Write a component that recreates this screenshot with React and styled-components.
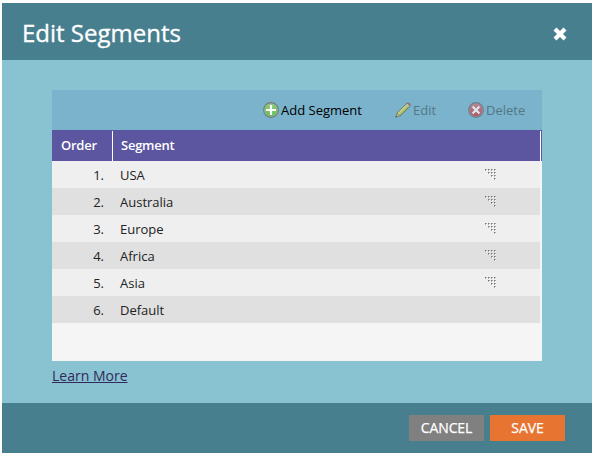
import React from "react";
import styled, { createGlobalStyle } from "styled-components";

const GlobalStyle = createGlobalStyle`
  * { box-sizing: border-box; }
  body {
    margin: 0;
    background: #fff;
    font-family: "Open Sans", "Noto Sans", sans-serif;
  }
  button { font-family: inherit; border: 0; padding: 0; margin: 0; background: none; }
  svg { flex-shrink: 0; }
`;

const Dialog = styled.section`
  display: flex;
  flex-direction: column;
  width: 590px;
  height: 450px;
  margin: 3px 0 0 2px;
  background: #89c2d0;
`;

const Header = styled.header`
  display: flex;
  align-items: center;
  justify-content: space-between;
  height: 57px;
  padding: 0 25px 0 20px;
  background: #477f8f;
`;

const Title = styled.h1`
  margin: 0;
  padding-top: 3px;
  font-size: 24px;
  font-weight: 400;
  line-height: 32px;
  color: #fff;
  -webkit-text-stroke: 0.3px #fff;
`;

const CloseButton = styled.button`
  display: flex;
  width: 14px;
  height: 14px;
  margin-top: 5px;
`;

const Body = styled.div`
  flex: 1;
  padding: 30px 50px 0;
`;

const Panel = styled.div`
  height: 271px;
  background: #f5f5f5;
`;

const Toolbar = styled.div`
  display: flex;
  justify-content: flex-end;
  align-items: center;
  height: 40px;
  padding-right: 17px;
  background: #7ab3cb;
`;

const ToolButton = styled.button`
  display: flex;
  align-items: center;
  gap: 2px;
  margin-left: ${(p) => p.$before || 0}px;
  font-size: 13px;
  line-height: 20px;
  color: ${(p) => (p.disabled ? "#557785" : "#000")};
`;

const ToolLabel = styled.span`
  width: ${(p) => p.$width}px;
  white-space: nowrap;
  text-align: left;
`;

const TableHead = styled.div`
  display: flex;
  height: 31px;
  padding: 1px 1px 0 0;
  background: #5c559f;
`;

const HeadCell = styled.div`
  flex: ${(p) => (p.$width ? `0 0 ${p.$width}px` : 1)};
  padding-left: ${(p) => p.$inset}px;
  border-right: 1px solid #fff;
  font-size: 13px;
  font-weight: 600;
  line-height: 29px;
  letter-spacing: -0.25px;
  color: #fff;
`;

const Row = styled.div`
  display: grid;
  grid-template-columns: 52px 1fr 12px;
  column-gap: 16px;
  align-items: center;
  width: 488px;
  height: 27px;
  padding-right: 43px;
  background: ${(p) => (p.$shaded ? "#e0e0e0" : "#efefef")};
  font-size: 13px;
  line-height: 25px;
  color: #222;
`;

const Cell = styled.span`
  padding-top: 2px;
  text-align: ${(p) => (p.$numeric ? "right" : "left")};
`;

const LearnMore = styled.a`
  display: inline-block;
  margin-top: 5px;
  font-size: 14px;
  line-height: 20px;
  color: #30295c;
  text-decoration: underline;
`;

const Footer = styled.footer`
  display: flex;
  justify-content: flex-end;
  gap: 6px;
  height: 50px;
  padding: 12px 27px 0 0;
  background: #477f8f;
`;

const FooterButton = styled.button`
  width: 75px;
  height: 26px;
  background: ${(p) => (p.$primary ? "#e87432" : "#808080")};
  color: #fff;
  font-size: 14px;
  line-height: 26px;
  letter-spacing: -0.1px;
  -webkit-text-stroke: 0.25px #fff;
`;

const CloseIcon = () => (
  <svg width="14" height="14" viewBox="0 0 14 14">
    <path d="M2 2 12 12M12 2 2 12" stroke="#fff" strokeWidth="4.2" />
  </svg>
);

const AddIcon = () => (
  <svg width="16" height="16" viewBox="0 0 16 16">
    <defs>
      <linearGradient id="addFill" x1="0" y1="0" x2="0" y2="1">
        <stop offset="0" stopColor="#8ccb7c" />
        <stop offset="1" stopColor="#5ec24e" />
      </linearGradient>
    </defs>
    <circle cx="8" cy="8" r="7.9" fill="#6d7a78" />
    <circle cx="8" cy="8" r="6.8" fill="#a5b5a2" />
    <circle cx="8" cy="8" r="6.2" fill="url(#addFill)" />
    <path d="M8 3v10M3 8h10" stroke="#fff" strokeWidth="2.2" />
  </svg>
);

const PencilIcon = () => (
  <svg width="16" height="16" viewBox="0 0 16 16">
    <path d="M.5 15.5 1.7 11 11.5 1.2Q13-.1 14.8 1.3 16.3 3 15 4.5L5.2 14.2Z" fill="#66795f" />
    <path d="M2.4 11.4 10.8 3 13.1 5.3 4.7 13.6Z" fill="#b9c56b" />
    <path d="M3 11.5 11 3.6" stroke="#e2e3a0" />
    <path d="M10.8 2.9 12 1.8 14.4 4.1 13.3 5.2Z" fill="#c5d3d6" />
    <path d="M12.2 1.6Q13.4.6 14.5 1.7T14.6 4Z" fill="#bd6b70" />
    <path d="m1.1 14.8.9-3.1 2.4 2.3Z" fill="#c3b997" />
    <path d="m.5 15.5.6-2 1.5 1.3Z" fill="#46565a" />
  </svg>
);

const DeleteIcon = () => (
  <svg width="16" height="16" viewBox="0 0 16 16">
    <defs>
      <linearGradient id="deleteFill" x1="0" y1="0" x2="0" y2="1">
        <stop offset="0" stopColor="#b58791" />
        <stop offset="1" stopColor="#b65464" />
      </linearGradient>
    </defs>
    <circle cx="8" cy="8" r="7.9" fill="#68808c" />
    <circle cx="8" cy="8" r="6.8" fill="#9b929c" />
    <circle cx="8" cy="8" r="6.2" fill="url(#deleteFill)" />
    <path d="m4.6 4.6 6.8 6.8m0-6.8-6.8 6.8" stroke="#dce9f0" strokeWidth="2.1" />
  </svg>
);

const GRIP_DOTS = [0, 1, 2, 3].flatMap((row) =>
  [0, 1, 2, 3].filter((col) => col >= row).map((col) => [col * 3, row * 3])
);

const GripIcon = () => (
  <svg width="12" height="12" viewBox="0 0 12 12" shapeRendering="crispEdges">
    {GRIP_DOTS.map(([x, y]) => (
      <g key={`${x}-${y}`}>
        <path d={`M${x} ${y}h2v2h-2z`} fill="#aaa" />
        <path d={`M${x} ${y}h1v1h-1z`} fill="#777" />
        <path d={`M${x + 1} ${y + 1}h1v1h-1z`} fill="#fff" />
      </g>
    ))}
  </svg>
);

const SEGMENTS = ["USA", "Australia", "Europe", "Africa", "Asia", "Default"];

export default function App() {
  return (
    <>
      <GlobalStyle />
      <Dialog>
        <Header>
          <Title>Edit Segments</Title>
          <CloseButton aria-label="Close"><CloseIcon /></CloseButton>
        </Header>
        <Body>
          <Panel>
            <Toolbar>
              <ToolButton><AddIcon /><ToolLabel $width={82}>Add Segment</ToolLabel></ToolButton>
              <ToolButton disabled $before={32}><PencilIcon /><ToolLabel $width={23}>Edit</ToolLabel></ToolButton>
              <ToolButton disabled $before={32}><DeleteIcon /><ToolLabel $width={39}>Delete</ToolLabel></ToolButton>
            </Toolbar>
            <TableHead>
              <HeadCell $width={61} $inset={9}>Order</HeadCell>
              <HeadCell $inset={8}>Segment</HeadCell>
            </TableHead>
            {SEGMENTS.map((name, i) => (
              <Row key={name} $shaded={i % 2 === 1}>
                <Cell $numeric>{i + 1}.</Cell>
                <Cell>{name}</Cell>
                {name !== "Default" && <GripIcon />}
              </Row>
            ))}
          </Panel>
          <LearnMore>Learn More</LearnMore>
        </Body>
        <Footer>
          <FooterButton>CANCEL</FooterButton>
          <FooterButton $primary>SAVE</FooterButton>
        </Footer>
      </Dialog>
    </>
  );
}
